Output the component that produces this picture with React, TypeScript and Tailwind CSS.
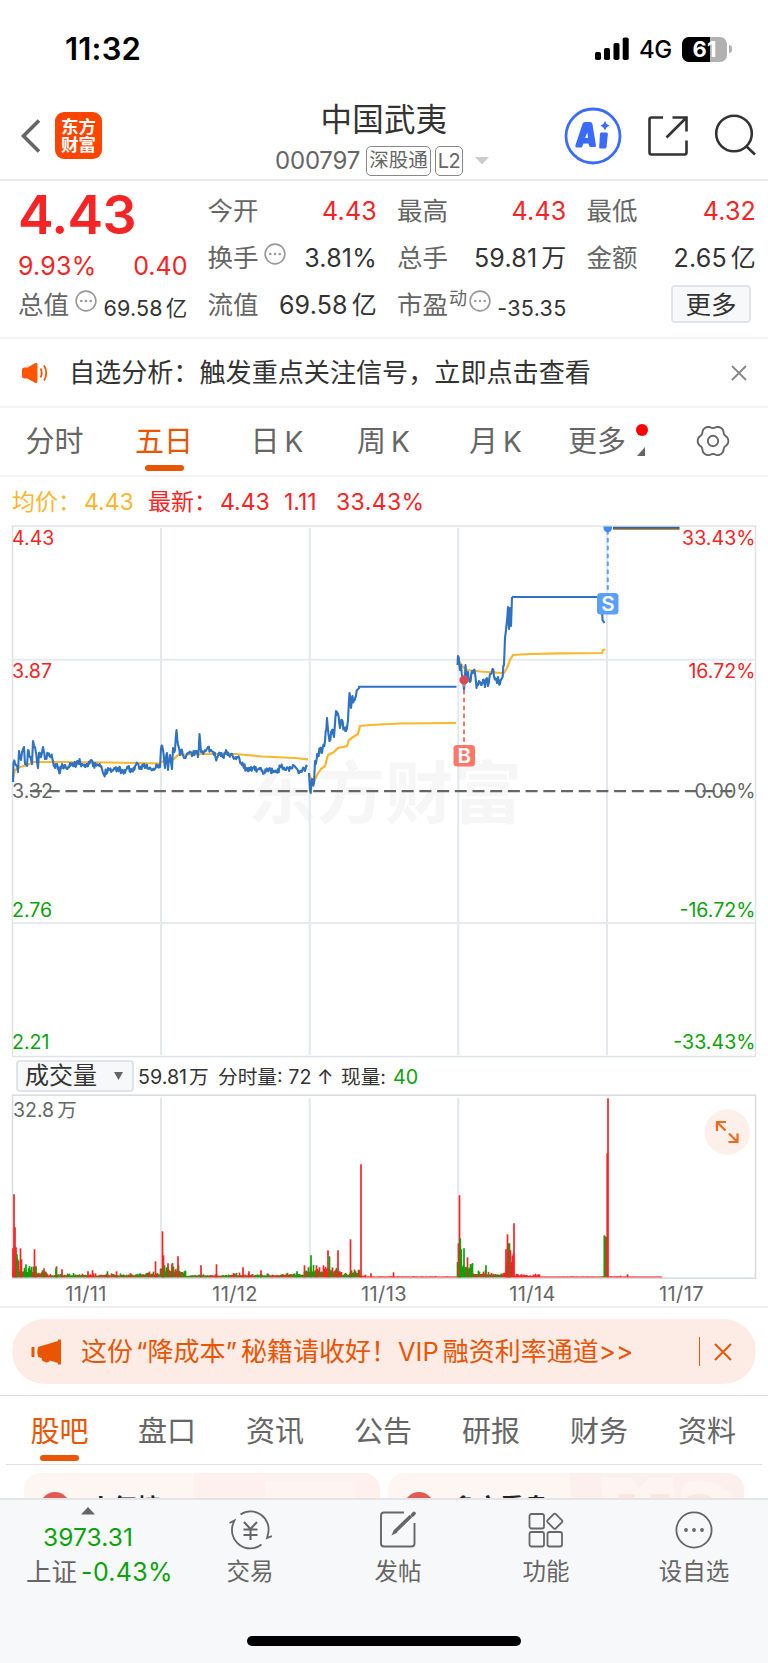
import React from 'react'

type Point = [number, number]

// small seeded generator so the chart noise is stable between renders
function makeRandom(seed: number) {
  let s = seed
  return () => {
    s = (s * 16807) % 2147483647
    return s / 2147483647
  }
}

const day1: Point[] = [
  [13, 782], [13.5, 763], [16, 765], [18, 772], [19, 751], [21, 760], [22, 752], [24, 747], [25, 764], [27, 766],
  [28, 750], [30, 757], [32, 764], [33, 741], [35, 747], [37, 762], [38, 768], [39, 753], [41, 757], [43, 747],
  [45, 759], [48, 755], [51, 756], [53, 761], [55, 768], [57, 764], [60, 773], [62, 764], [66, 768], [70, 763],
  [74, 766], [78, 761], [82, 764], [86, 765], [91, 760], [93, 766], [98, 765], [102, 769], [104, 775], [108, 768],
  [112, 770], [118, 768], [123, 772], [128, 768], [132, 771], [136, 765], [140, 769], [144, 764], [149, 769],
  [154, 770], [158, 765], [160, 767], [161, 748],
]
const day2: Point[] = [
  [161, 748], [163, 750], [165, 768], [167, 753], [168, 770], [170, 755], [172, 769], [173, 748], [175, 750],
  [176.5, 730], [178, 745], [180, 755], [182, 750], [184, 758], [188, 753], [192, 756], [195, 751], [198, 757],
  [199.5, 734], [201, 752], [204, 752], [208, 747], [211, 750], [214, 755], [217, 758], [220, 753], [223, 757],
  [226, 750], [229, 755], [233, 757], [237, 757], [241, 763], [246, 769], [251, 767], [255, 770], [260, 769],
  [264, 773], [269, 769], [275, 772], [281, 767], [286, 770], [293, 765], [297, 769], [301, 772], [304, 768],
  [307, 767],
]
const day3: Point[] = [
  [309, 773], [310, 790], [310.7, 793], [312, 779], [314, 783], [315, 761], [318, 756], [320, 750], [322, 753],
  [325, 741], [327, 718], [328, 730], [329.5, 741], [332, 730], [334, 737], [336, 711], [338, 714], [340, 728],
  [342, 720], [344, 728], [346, 731], [348, 720], [349.5, 693], [351, 708], [352.5, 696], [354, 700], [356, 696],
  [358, 689], [359, 689],
]
const day4: Point[] = [
  [457.5, 665], [458, 656], [460, 670], [461, 665], [463, 680], [464, 690], [465.5, 665], [467, 680], [468, 672],
  [470, 682], [472, 671], [475, 673], [476.5, 688], [479, 681], [481, 685], [483, 680], [485, 687], [487, 678],
  [488, 686], [490, 674], [492.5, 669], [494, 676], [497, 683], [498, 677], [500, 684], [502, 678], [504, 665],
  [505, 638], [506, 630], [508, 607], [509, 629], [510, 608], [511, 626], [512, 597],
]

function noisyPath(points: Point[], amp: number, seed: number) {
  const rand = makeRandom(seed)
  let d = `M${points[0][0]} ${points[0][1]}`
  for (let i = 1; i < points.length; i++) {
    const [x0, y0] = points[i - 1]
    const [x1, y1] = points[i]
    const steps = Math.max(1, Math.round((x1 - x0) / 0.75))
    for (let k = 1; k < steps; k++) {
      const t = k / steps
      const y = y0 + (y1 - y0) * t + (rand() - 0.5) * amp
      d += `L${(x0 + (x1 - x0) * t).toFixed(1)} ${y.toFixed(1)}`
    }
    d += `L${x1} ${y1}`
  }
  return d
}

const RED = '#f62424'
const GREEN = '#0aa30a'

// [from, to, max height, share of green bars]
const volumeRanges: [number, number, number, number][] = [
  [13, 19, 24, 0.4], [19, 36, 15, 0.6], [36, 48, 8, 0.5], [48, 90, 5, 0.5], [90, 140, 4.5, 0.45], [140, 160, 7, 0.5],
  [160, 180, 16, 0.6], [180, 186, 11, 0.7], [186, 230, 4, 0.5], [230, 280, 5, 0.4], [280, 304, 6, 0.5],
  [304, 325, 15, 0.45], [325, 342, 14, 0.5], [342, 350, 6, 0.8], [350, 360, 12, 0.5], [360, 366, 3, 0],
  [366, 457, 1.4, 0], [457, 462, 32, 0.8], [462, 473, 22, 0.9], [473, 486, 8, 0.5], [486, 502, 6.5, 0.5],
  [502, 506, 8, 0], [506, 514, 34, 0.2], [514, 540, 4, 0], [540, 604, 1.2, 0], [608, 622, 2, 0], [622, 662, 1, 0],
]
const volumeSpikes: [number, number, string][] = [
  [14, 83, RED], [15, 50, RED], [13, 29, RED], [16, 30, RED], [17, 23, GREEN], [20.5, 29, RED], [21.5, 18, RED],
  [26, 13, GREEN], [34.5, 28, RED], [36, 11, GREEN], [44, 9, RED], [56.5, 11, RED], [56, 9, GREEN], [62, 8, RED],
  [88, 6, RED], [92.5, 7, RED], [107.5, 6, GREEN], [116.5, 6, RED], [155.5, 16, RED], [162.5, 46, RED], [163.5, 22, RED],
  [164.5, 12, GREEN], [168, 14, RED], [172, 13, RED], [178, 21, RED], [201, 12, RED], [216.5, 13, RED], [243, 10, RED],
  [249, 6, RED], [261, 7, RED], [297, 6, GREEN], [304.5, 12, RED], [311, 22, GREEN], [316.5, 12, RED], [328, 27, RED],
  [329.5, 21, GREEN], [338, 27, RED], [350.5, 38, RED], [361, 113, RED], [371, 4, RED], [393.5, 5, RED],
  [458.5, 34, RED], [459.5, 82, RED], [460.3, 39, GREEN], [461.2, 28, GREEN], [464, 29, GREEN], [467.5, 20, RED],
  [471, 13, GREEN], [486, 12, GREEN], [506, 28, RED], [507.5, 43, RED], [508.5, 34, RED], [509.5, 34, GREEN],
  [510.5, 27, RED], [514, 54, RED], [604.3, 42, GREEN], [605.3, 41, GREEN], [606.4, 40, RED], [607.2, 124, RED],
  [608, 179, RED], [627.5, 3, RED],
]

function volumeBars() {
  const rand = makeRandom(77)
  const bars: [number, number, string][] = []
  volumeRanges.forEach(([from, to, max, green]) => {
    for (let x = from; x < to; x += 1) {
      const h = max * (0.35 + 0.65 * rand() * rand())
      bars.push([x + 0.5, Math.max(h, 0.7), rand() < green ? GREEN : RED])
    }
  })
  return bars.concat(volumeSpikes)
}

function gearPath(c: number, r: number) {
  let d = ''
  for (let a = 0; a < 360; a += 4) {
    const t = (a * Math.PI) / 180
    const w = Math.cos(6 * t)
    const rad = r + 1.2 * w - 0.2 * Math.cos(12 * t)
    d += `${a ? 'L' : 'M'}${(c + rad * Math.cos(t)).toFixed(2)} ${(c + rad * Math.sin(t)).toFixed(2)}`
  }
  return d + 'Z'
}

function Dots() {
  return (
    <svg width="22" height="22" viewBox="0 0 22 22" className="shrink-0">
      <circle cx="11" cy="11" r="9.9" fill="none" stroke="#999" strokeWidth="1.600" />
      <circle cx="6.300" cy="11" r="1.300" fill="#999" />
      <circle cx="11" cy="11" r="1.300" fill="#999" />
      <circle cx="15.700" cy="11" r="1.300" fill="#999" />
    </svg>
  )
}

function StatusBar() {
  return (
    <div className="h-[98px] flex items-start justify-between pl-[65px] pr-[36px] pt-[34px] text-black">
      <div className="text-[31px] leading-[30px] font-semibold tracking-[0.2px]">11:32</div>
      <div className="flex items-center h-[28px] mt-[1px]">
        <svg width="34" height="24" viewBox="0 0 34 24">
          <rect x="0" y="15" width="6" height="8" rx="1.8" />
          <rect x="9" y="11" width="6" height="12" rx="1.8" />
          <rect x="18.500" y="6" width="6" height="17" rx="1.8" />
          <rect x="27.700" y="0.500" width="6" height="22.500" rx="1.8" />
        </svg>
        <div className="text-[24px] font-medium ml-[10px] pt-[2px] tracking-[-0.3px]">4G</div>
        <div className="relative ml-[10px] w-[45px] h-[25px] rounded-[7px] overflow-hidden bg-[#b1b1b1] flex items-center justify-center">
          <div className="absolute left-0 top-0 w-[28px] h-full bg-black" />
          <span className="relative text-white font-bold text-[22px] leading-none">61</span>
        </div>
        <div className="w-[3px] h-[8px] rounded-r-full bg-[#b1b1b1] ml-[2px]" />
      </div>
    </div>
  )
}

function Header() {
  return (
    <div className="h-[83px] flex border-b-2 border-[#e9e9e9] pl-[20px] pr-[11px]">
      <div className="flex w-[221px] items-start">
        <svg width="22" height="36" viewBox="0 0 22 36" className="mt-[20px]">
          <path d="M19 2.500L3.500 18L19 33.500" fill="none" stroke="#666" strokeWidth="3.600" />
        </svg>
        <div className="ml-[13px] mt-[14px] w-[47px] h-[47px] rounded-[9px] bg-[#ff4400] text-white font-bold text-[17.5px] leading-[18px] flex flex-col items-center justify-center">
          <span>东方</span>
          <span>财富</span>
        </div>
      </div>
      <div className="flex-1 flex flex-col items-center pt-[4px]">
        <div className="text-[31.5px] leading-[36px] text-[#333] tracking-[0.3px]">中国武夷</div>
        <div className="flex items-center h-[30px] mt-[8px] mr-[4px] text-[#666]">
          <span className="text-[24px] tracking-[-0.2px] w-[85px] mr-[6px]">000797</span>
          <span className="h-[30px] w-[65px] rounded-[5px] border-[1.5px] border-[#888] text-[19.5px] leading-[27px] text-center">深股通</span>
          <span className="h-[30px] w-[28px] ml-[4px] rounded-[5px] border-[1.5px] border-[#888] text-[20px] leading-[28px] text-center tracking-[-0.5px]">L2</span>
          <svg width="14" height="8" viewBox="0 0 14 8" className="ml-[12px]">
            <path d="M0 0H14L7 7.500Z" fill="#ccc" />
          </svg>
        </div>
      </div>
      <div className="w-[230px] flex justify-end items-start pt-[9px]">
        <svg width="58" height="58" viewBox="0 0 58 58">
          <circle cx="29" cy="29" r="27" fill="none" stroke="#3a6bff" strokeWidth="2.800" />
          <path d="M11.500 38L18.500 17Q19.200 15 21 15H26Q28 15 28.400 17L32 38.500Q32.200 40 30.500 40H27Q25.300 40 25 38.500L24.500 36.500H19.500L18.500 39Q18 40.500 16.500 40.500H13Q10.800 40.500 11.500 38ZM21 31H24L23.400 25.500Z" fill="#3a6bff" fillRule="evenodd" />
          <path d="M37 25.500H42.500Q44 25.500 43.900 27L42.500 40Q42.400 41.500 41 41.500H36.500Q35 41.500 35.200 40L36 27Q36 25.500 37 25.500Z" fill="#3a6bff" />
          <path d="M41 14L42.500 17L45.500 18.500L42.500 20.500L41 23.500L39.400 20.500L36.500 18.500L39.400 17Z" fill="#3a6bff" />
        </svg>
        <svg width="42" height="42" viewBox="0 0 42 42" className="ml-[25px] mt-[8px]" fill="none" stroke="#333" strokeWidth="2.600">
          <path d="M16 2.500H4.500Q2.500 2.500 2.500 4.500V37.500Q2.500 39.500 4.500 39.500H37.500Q39.500 39.500 39.500 37.500V25.500" />
          <path d="M25.500 2.500H39.500V16.500M39 3L19.500 22.500" />
        </svg>
        <svg width="44" height="44" viewBox="0 0 44 44" className="ml-[24px] mt-[6px]" fill="none" stroke="#333" strokeWidth="2.600">
          <circle cx="21" cy="20.500" r="17.800" />
          <path d="M33 33L42 41.500" />
        </svg>
      </div>
    </div>
  )
}

function Stat({ label, value, red }: { label: React.ReactNode; value: React.ReactNode; red?: boolean }) {
  return (
    <div className="h-[47px] flex items-center justify-between">
      <span className="flex items-center text-[25.5px] text-[#666]">{label}</span>
      <span className={red ? 'text-[25px] pt-[1px] tracking-[0.2px] text-[#f62424]' : 'text-[25px] pt-[1px] tracking-[0.2px] text-[#333]'}>{value}</span>
    </div>
  )
}

function Quote() {
  return (
    <div className="h-[158px] pt-[7px] pl-[18px] pr-[12px] grid grid-cols-4 gap-x-[20px] border-b-2 border-[#f3f3f3] whitespace-nowrap">
      <div>
        <div className="text-[53.5px] leading-[54px] font-semibold text-[#f62424] tracking-[-0.7px]">4.43</div>
        <div className="h-[40px] pt-[9px] flex items-center justify-between text-[25px] text-[#f62424]">
          <span className="tracking-[0.2px]">9.93%</span>
          <span>0.40</span>
        </div>
        <div className="h-[47px] flex items-center justify-between">
          <span className="flex items-center text-[25.5px] text-[#666]">
            总值<span className="ml-[6px] mb-[9px]"><Dots /></span>
          </span>
          <span className="text-[21.5px] text-[#333] pt-[6px] tracking-[0.2px]">69.58<span className="ml-[3px]">亿</span></span>
        </div>
      </div>
      <div>
        <Stat label="今开" value="4.43" red />
        <Stat label={<>换手<span className="ml-[5px] mb-[10px]"><Dots /></span></>} value="3.81%" />
        <Stat label="流值" value={<>69.58<span className="ml-[4px]">亿</span></>} />
      </div>
      <div>
        <Stat label="最高" value="4.43" red />
        <Stat label="总手" value={<>59.81<span className="ml-[4px]">万</span></>} />
        <div className="h-[47px] flex items-center justify-between">
          <span className="flex items-center text-[25.5px] text-[#666]">
            市盈<span className="text-[18px] ml-[1px] mb-[14px]">动</span>
            <span className="ml-[2px] mb-[9px]"><Dots /></span>
          </span>
          <span className="text-[21.5px] text-[#333] pt-[6px] tracking-[0.3px]">-35.35</span>
        </div>
      </div>
      <div>
        <Stat label="最低" value="4.32" red />
        <Stat label="金额" value={<>2.65<span className="ml-[4px]">亿</span></>} />
        <div className="flex justify-end pt-[3px] pr-[5px]">
          <div className="w-[80px] h-[38px] rounded-[4px] border-2 border-[#dfe3ea] bg-[#f7f8fa] text-[25.5px] leading-[35px] text-center text-[#333]">更多</div>
        </div>
      </div>
    </div>
  )
}

function Notice() {
  return (
    <div className="h-[69px] flex items-center border-b-2 border-[#f3f3f3] pl-[21px] pr-[20px]">
      <svg width="28" height="24" viewBox="0 0 28 24">
        <path d="M1 9Q1 6.500 3.500 6.500H6.500L14 2.200Q16.500 1 16.500 4V20Q16.500 23 14 21.800L6.500 17.500H3.500Q1 17.500 1 15Z" fill="#ff5500" />
        <path d="M19.500 7.500Q22 12 19.500 16.500M23 4.500Q27.500 12 23 19.500" fill="none" stroke="#ff5500" strokeWidth="1.800" />
      </svg>
      <div className="ml-[20px] text-[26.1px] text-[#333] flex-1 leading-[36px]">自选分析：触发重点关注信号，立即点击查看</div>
      <svg width="18" height="18" viewBox="0 0 18 18">
        <path d="M2 2L16 16M16 2L2 16" stroke="#888" strokeWidth="1.800" />
      </svg>
    </div>
  )
}

function PeriodTabs() {
  return (
    <div className="h-[69px] flex border-b-2 border-[#f3f3f3] text-[29px] leading-[36px] text-[#666] pt-[16px] text-center">
      <div className="w-[109px]">分时</div>
      <div className="w-[110px] flex flex-col items-center text-[#ea5504]">
        五日
        <div className="w-[39px] h-[6px] rounded-full bg-[#ea5504] mt-[5px]" />
      </div>
      <div className="w-[116px]">日<span className="ml-[5px] text-[28px]">K</span></div>
      <div className="w-[97px]">周<span className="ml-[5px] text-[28px]">K</span></div>
      <div className="w-[127px]">月<span className="ml-[5px] text-[28px]">K</span></div>
      <div className="flex ml-[9px] w-[128px]">
        更多
        <div className="flex flex-col items-center ml-[10px]">
          <div className="w-[12px] h-[12px] rounded-full bg-[#ff0000]" />
          <svg width="8" height="9" viewBox="0 0 8 9" className="mt-[11px] mr-[3px]">
            <path d="M8 0V9H0Z" fill="#666" />
          </svg>
        </div>
      </div>
      <svg width="34" height="34" viewBox="0 0 34 34">
        <path d={gearPath(17, 14.3)} fill="none" stroke="#666" strokeWidth="1.900" strokeLinejoin="round" />
        <circle cx="17" cy="17" r="5.200" fill="none" stroke="#666" strokeWidth="1.900" />
      </svg>
    </div>
  )
}

const priceLabels = [
  { y: 545, left: '4.43', right: '33.43%', color: RED },
  { y: 677.5, left: '3.87', right: '16.72%', color: RED },
  { y: 797.5, left: '3.32', right: '0.00%', color: '#666' },
  { y: 917, left: '2.76', right: '-16.72%', color: GREEN },
  { y: 1049, left: '2.21', right: '-33.43%', color: GREEN },
]

function PriceChart() {
  return (
    <svg width="768" height="533" viewBox="0 525 768 533" className="block" fill="none">
      <text x="248" y="818" fontSize="68.500" fontWeight="700" fill="#f6f6f6">东方财富</text>
      <rect x="12.500" y="526" width="743" height="530.500" stroke="#dfe2e8" strokeWidth="1.500" />
      <path d="M161 528V1055M309.700 528V1055M458.300 528V1055M607 528V1055" stroke="#e3e6ee" strokeWidth="1.900" />
      <path d="M13 659.700H755M13 923H755" stroke="#e8eaf0" strokeWidth="1.900" />
      <path d="M30 791.200H738" stroke="#666" strokeWidth="2.200" strokeDasharray="12 5.7" />
      {/* average price */}
      <g stroke="#fbb62d" strokeWidth="2.200">
        <path d="M13 778L15 770L20 767L27 765L34 762L60 762L110 762.500L160 763.500" />
        <path d="M161 762L168 760L174 759L178 755L186 754.500L210 754L235 754L262 756.500L295 758L308 759.300" />
        <path d="M309.500 775L313 784L317 775L321 769L325 766L328 755L334 752L338 748L347 746L349 740L353 737L358 734L360 726L370 725L400 723.500L456 723" />
        <path d="M458 660L461 664L463 667L467 670L480 671.500L504 673L507 668L510 660L513 655L530 654L560 653.300L602 653L603 650L605.500 649.500" />
        <path d="M613 528.800H679.500" stroke="#b98c33" />
      </g>
      {/* last price */}
      <g stroke="#2f72c2" strokeWidth="2.100" strokeLinejoin="round">
        <path d={noisyPath(day1, 6.5, 11)} />
        <path d={noisyPath(day2, 6.5, 23)} />
        <path d={noisyPath(day3, 9, 37)} />
        <path d="M359 689V686.700H456.500" />
        <path d={noisyPath(day4, 7, 41)} />
        <path d="M512 597H601.500L602.500 620L604.500 623" />
        <path d="M613 527.800H679.500" stroke="#33659c" />
      </g>
      <path d="M464 682V745" stroke="#ff7769" strokeWidth="2" strokeDasharray="4.5 3.4" />
      <circle cx="464" cy="680" r="4.300" fill="#d9484f" stroke="#c0626f" strokeWidth="0.800" />
      <rect x="453.500" y="745" width="21.500" height="21.500" rx="3.500" fill="#ff7769" />
      <text x="464.300" y="763" fontSize="20.500" fontWeight="600" fill="#fff" textAnchor="middle">B</text>
      <path d="M607.800 530V593" stroke="#5a9fff" strokeWidth="2" strokeDasharray="4.5 3.4" />
      <path d="M603.500 526.500H612V528A4.200 4.200 0 0 1 603.500 528Z" fill="#3f8af5" />
      <rect x="597" y="593" width="21.500" height="21.500" rx="3.500" fill="#5a9fff" />
      <text x="607.800" y="611" fontSize="20.500" fontWeight="600" fill="#fff" textAnchor="middle">S</text>
      {priceLabels.map((l) => (
        <g key={l.left} fontSize="19.600" fill={l.color}>
          <text x="12" y={l.y}>{l.left}</text>
          <text x="755.500" y={l.y} textAnchor="end">{l.right}</text>
        </g>
      ))}
    </svg>
  )
}

function VolumeChart() {
  const dates = [
    { x: 86, label: '11/11' },
    { x: 235, label: '11/12' },
    { x: 384, label: '11/13' },
    { x: 532.5, label: '11/14' },
    { x: 681.5, label: '11/17' },
  ]
  return (
    <svg width="768" height="212" viewBox="0 1094 768 212" className="block" fill="none">
      <rect x="12.500" y="1095.200" width="743" height="183" stroke="#d9dce2" strokeWidth="1.600" />
      <path d="M161 1098V1277M309.700 1098V1277M458.300 1098V1277" stroke="#e3e6ee" strokeWidth="1.900" />
      {volumeBars().map(([x, h, color], i) => (
        <path key={i} d={`M${x} 1277.300V${(1277.3 - h).toFixed(1)}`} stroke={color} strokeWidth="1.700" />
      ))}
      <text x="13" y="1117" fontSize="19.500" fill="#666">32.8<tspan dx="3">万</tspan></text>
      <circle cx="727.300" cy="1132" r="22.800" fill="#fdf0ea" />
      <path d="M717 1131V1122H726M717.500 1122.500L725.500 1130.500M737.500 1133.500V1142H728.500M737 1141.500L729 1133.500" stroke="#ee6a1f" strokeWidth="2.200" />
      {dates.map((d) => (
        <text key={d.label} x={d.x} y="1300.500" fontSize="20" letterSpacing="0.4" fill="#666" textAnchor="middle">{d.label}</text>
      ))}
    </svg>
  )
}

function Charts() {
  return (
    <div className="border-b-2 border-[#efefef]">
      <div className="h-[48px] flex items-center pl-[12px] pt-[2px] text-[23px] text-[#f62424] whitespace-nowrap">
        <span className="text-[#fbb62d] w-[72px]">均价：</span>
        <span className="text-[#fbb62d] w-[64px]">4.43</span>
        <span className="w-[72px]">最新：</span>
        <span className="w-[64px]">4.43</span>
        <span className="w-[52px]">1.11</span>
        <span className="tracking-[0.4px]">33.43%</span>
      </div>
      <PriceChart />
      <div className="h-[36px] flex items-center pl-[16px] text-[19.7px] text-[#333] whitespace-nowrap">
        <div className="w-[118px] h-[32px] rounded-[4px] border-2 border-[#dfe3ea] bg-[#f7f8fa] flex items-center justify-between pl-[7px] pr-[9px] text-[24px] leading-[28px]">
          成交量
          <svg width="9" height="8" viewBox="0 0 9 8"><path d="M0 0H9L4.500 8Z" fill="#666" /></svg>
        </div>
        <span className="ml-[4px] w-[80px] pt-[3px]">59.81<span className="ml-[2px]">万</span></span>
        <span className="w-[123px] pt-[3px]">分时量: 72 ↑</span>
        <span className="w-[52px] pt-[3px]">现量:</span>
        <span className="text-[#0aa30a] pt-[3px]">40</span>
      </div>
      <VolumeChart />
    </div>
  )
}

function Banner() {
  return (
    <div className="h-[88px] pt-[11px] px-[12px] border-b border-[#dfe1e5]">
      <div className="h-[65px] rounded-full bg-[#fcece5] text-[#ea5504] flex items-center pl-[19px] pr-[23px]">
        <svg width="32" height="28" viewBox="0 0 32 28" fill="#ea5504">
          <rect x="0.500" y="9" width="3" height="10" />
          <path d="M7 9L27 3V1.500H30V26.500H27V25L19 22.500Q17 25.500 14 24L11 22.500L10.500 20L7 19Q5.500 14 7 9Z" />
        </svg>
        <div className="ml-[18px] flex-1 text-[26px] leading-[34px] whitespace-nowrap">
          这份<span className="ml-[3px]">“</span>降成本<span className="mr-[4px]">”</span>秘籍请收好！<span className="text-[25.5px] ml-[1px]">VIP</span><span className="ml-[4px]">融资利率通道</span>&gt;&gt;
        </div>
        <div className="w-[1.5px] h-[29px] bg-[#ea5504] mr-[13px]" />
        <svg width="20" height="20" viewBox="0 0 20 20">
          <path d="M2 2L18 18M18 2L2 18" stroke="#ea5504" strokeWidth="1.900" />
        </svg>
      </div>
    </div>
  )
}

const sections = ['股吧', '盘口', '资讯', '公告', '研报', '财务', '资料']

function SectionTabs() {
  return (
    <div className="mx-[6px] h-[69px] grid grid-cols-7 border-b border-[#dfe1e5] text-[29px] leading-[36px] pt-[18px] text-[#666]">
      {sections.map((name, i) => (
        <div key={name} className={i === 0 ? 'flex flex-col items-center text-[#ea5504] -ml-[1px]' : 'text-center -ml-[2px]'}>
          {name}
          {i === 0 && <div className="w-[39px] h-[6px] rounded-full bg-[#ea5504] mt-[5px]" />}
        </div>
      ))}
    </div>
  )
}

function Cards() {
  return (
    <div className="h-[33px] overflow-hidden flex gap-[8px] pl-[24px] pt-[8px] text-[#222] font-bold text-[24px] leading-[30px]">
      <div className="w-[356px] h-[80px] shrink-0 rounded-[16px] overflow-hidden bg-[#fef6f2] flex">
        <div className="w-[30px] h-[30px] rounded-full bg-[#e25b53] ml-[16px] mt-[19px]" />
        <div className="ml-[19px] mt-[20px] flex-1">人气榜</div>
        <div className="w-[186px] bg-[#fdf0ed]">
          <div className="ml-[71px] mt-[8px] w-[90px] h-[60px] bg-[#fef4f0]" />
        </div>
      </div>
      <div className="w-[356px] h-[80px] shrink-0 rounded-[16px] overflow-hidden bg-[#fef6f2] flex">
        <div className="w-[30px] h-[30px] rounded-full bg-[#e25b53] ml-[16px] mt-[19px]" />
        <div className="ml-[18px] mt-[20px] flex-1">多空看盘</div>
        <svg width="175" height="80" viewBox="0 0 175 80">
          <path d="M0 0H175V80H8Z" fill="#fdefec" />
          <path d="M32 4H62L70 15L80 4H105V80H34ZM115 10Q150 2 170 30H110Z" fill="#fef5f0" />
          <path d="M50 21H66V40H50ZM82 21H100V40H82ZM118 24Q130 17 142 24V40H118Z" fill="#fde5e1" />
        </svg>
      </div>
    </div>
  )
}

function BottomBar() {
  return (
    <div className="h-[165px] bg-[#f7f8fa] border-t-2 border-[#e3e5e9] text-[#666] flex flex-col items-center">
      <div className="w-full h-[136px] flex text-[23.5px] leading-[30px]">
        <div className="w-[176px] flex flex-col items-center pt-[7px] whitespace-nowrap">
          <svg width="14" height="8" viewBox="0 0 14 8"><path d="M0 7.500H14L7 0Z" fill="#666" /></svg>
          <div className="text-[24.5px] mt-[7px] text-[#0aa30a] tracking-[0.1px]">3973.31</div>
          <div className="mt-[5px] ml-[23px] text-[25.5px]">上证<span className="text-[#0aa30a] ml-[4px] text-[25px] tracking-[0.3px]">-0.43%</span></div>
        </div>
        <div className="w-[148px] flex flex-col items-center pt-[10px]">
          <svg width="44" height="40" viewBox="0 0 44 40" fill="none" stroke="#666" strokeWidth="1.800">
            <path d="M12.500 4.500A18 18 0 0 1 40 24L39 28L44 26M33.500 34.500A18.300 18.300 0 0 1 5 14L6.500 10.500L1.500 13" />
            <path d="M16 12L22.500 19L29 12M22.500 19V30M15.500 19.500H29.500M15.500 25H29.500" strokeWidth="2.100" />
          </svg>
          <div className="mt-[7px]">交易</div>
        </div>
        <div className="w-[148px] flex flex-col items-center pt-[10px]">
          <svg width="40" height="40" viewBox="0 0 40 40" fill="none" stroke="#666" strokeWidth="1.900">
            <path d="M26 2.500H6Q3 2.500 3 5.500V33.500Q3 36.500 6 36.500H33.500Q36.500 36.500 36.500 33.500V13" />
            <path d="M33 6L17 21.500" strokeWidth="3.600" />
            <path d="M16 19.500L13.500 25.500L19.500 22.500Z" fill="#666" stroke="none" />
            <path d="M34.500 5L36 3.500" strokeWidth="3.600" strokeLinecap="round" />
          </svg>
          <div className="mt-[7px]">发帖</div>
        </div>
        <div className="w-[148px] flex flex-col items-center pt-[10px]">
          <svg width="38" height="40" viewBox="0 0 38 40" fill="none" stroke="#666" strokeWidth="1.800">
            <rect x="2.500" y="4" width="14.500" height="14.500" rx="2" />
            <rect x="2.500" y="22" width="14.500" height="14.500" rx="2" />
            <rect x="20.500" y="22" width="14.500" height="14.500" rx="2" />
            <rect x="22" y="5.500" width="11.500" height="11.500" rx="1.500" transform="rotate(45 27.750 11.250)" />
          </svg>
          <div className="mt-[7px]">功能</div>
        </div>
        <div className="w-[148px] flex flex-col items-center pt-[10px]">
          <svg width="40" height="40" viewBox="0 0 40 40">
            <circle cx="20" cy="20" r="17.600" fill="none" stroke="#666" strokeWidth="1.800" />
            <circle cx="12" cy="20" r="1.900" fill="#666" />
            <circle cx="20" cy="20" r="1.900" fill="#666" />
            <circle cx="28" cy="20" r="1.900" fill="#666" />
          </svg>
          <div className="mt-[7px]">设自选</div>
        </div>
      </div>
      <div className="w-[274px] h-[10px] rounded-full bg-black" />
    </div>
  )
}

function App() {
  return (
    <div className="w-[768px] h-[1663px] overflow-hidden bg-white font-[390] font-['Inter','Noto_Sans_CJK_SC',sans-serif]">
      <StatusBar />
      <Header />
      <Quote />
      <Notice />
      <PeriodTabs />
      <Charts />
      <Banner />
      <SectionTabs />
      <Cards />
      <BottomBar />
    </div>
  )
}

export default App
